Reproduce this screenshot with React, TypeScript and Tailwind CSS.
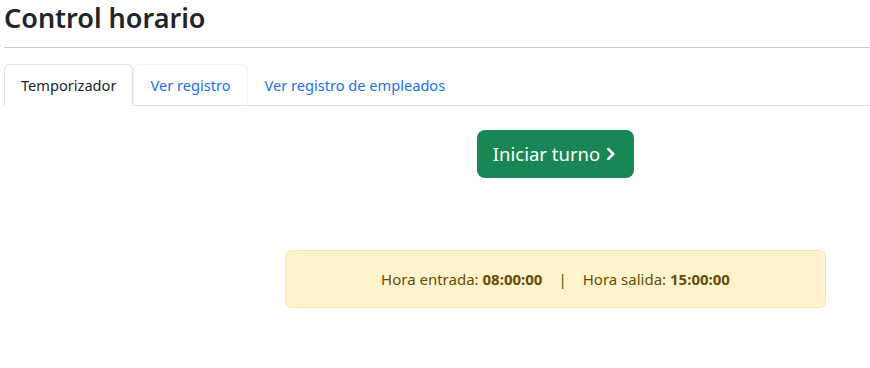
export default function App() {
  return (
    <div className="min-h-[368px] bg-white pl-[4px] text-[#212529] font-['Noto_Sans',sans-serif]">
      <h2 className="m-0 pt-px text-[27px] font-semibold leading-[34px]">Control horario</h2>

      <hr className="mt-[12px] mb-[16px] border-0 border-t border-[#cacaca]" />

      <ul className="flex border-b border-[#dee2e6] text-[14.6px]">
        <li className="-mb-px">
          <a className="block px-4 py-2 leading-6 rounded-t-md border border-[#dee2e6] border-b-white bg-white text-[#212529]">
            Temporizador
          </a>
        </li>
        <li className="-mb-px">
          <a className="block px-4 py-2 leading-6 rounded-t-md border border-[#f3f4f5] border-b-transparent text-[#1a6ff0]">
            Ver registro
          </a>
        </li>
        <li className="-mb-px">
          <a className="block px-4 py-2 leading-6 rounded-t-md border border-transparent text-[#1a6ff0]">
            Ver registro de empleados
          </a>
        </li>
      </ul>

      <div className="ml-[281px] w-[541px]">
        <div className="flex justify-center pt-6">
          <button className="flex items-center gap-1 rounded-lg bg-[#198754] px-4 py-[9px] text-[18.5px] leading-[30px] text-white">
            Iniciar turno
            <svg width="14" height="16" viewBox="0 0 16 16" fill="none" stroke="currentColor" strokeWidth="3" strokeLinecap="round" strokeLinejoin="round">
              <path d="M5 2.5 10.5 8 5 13.5" />
            </svg>
          </button>
        </div>

        <div className="mt-[72px] rounded-md border border-[#ffe69c] bg-[#fff3cd] p-4 text-center text-[15px] leading-6 text-[#664d03]">
          Hora entrada: <b className="font-bold">08:00:00</b>
          <span className="mx-4">|</span>
          Hora salida: <b className="font-bold">15:00:00</b>
        </div>
      </div>
    </div>
  );
}
